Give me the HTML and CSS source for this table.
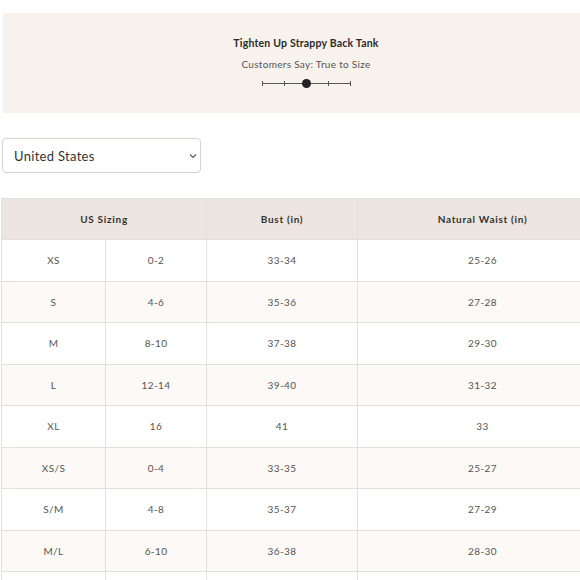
FILE: index.html
```html
<!DOCTYPE html>
<html>
<head>
<meta charset="utf-8">
<link rel="stylesheet" href="styles.css">
</head>
<body>
<div class="page">
<section class="banner">
  <div class="title">Tighten Up Strappy Back Tank</div>
  <div class="subtitle">Customers Say: True to Size</div>
  <div class="scale">
    <span class="tick t0"></span>
    <span class="tick t1"></span>
    <span class="tick t3"></span>
    <span class="tick t4"></span>
    <span class="dot"></span>
  </div>
</section>
<div class="select">
  <span class="select-text">United States</span>
  <svg class="chev" width="8" height="6" viewBox="0 0 8 6"><path d="M1 1.5 L4 4.5 L7 1.5" fill="none" stroke="#555" stroke-width="1.1"/></svg>
</div>
<table class="sizes">
  <colgroup><col class="c1"><col class="c2"><col class="c3"><col class="c4"></colgroup>
  <thead>
    <tr><th colspan="2">US Sizing</th><th>Bust (in)</th><th>Natural Waist (in)</th></tr>
  </thead>
  <tbody>
    <tr><td>XS</td><td>0-2</td><td>33-34</td><td>25-26</td></tr>
    <tr class="alt"><td>S</td><td>4-6</td><td>35-36</td><td>27-28</td></tr>
    <tr><td>M</td><td>8-10</td><td>37-38</td><td>29-30</td></tr>
    <tr class="alt"><td>L</td><td>12-14</td><td>39-40</td><td>31-32</td></tr>
    <tr><td>XL</td><td>16</td><td>41</td><td>33</td></tr>
    <tr class="alt"><td>XS/S</td><td>0-4</td><td>33-35</td><td>25-27</td></tr>
    <tr><td>S/M</td><td>4-8</td><td>35-37</td><td>27-29</td></tr>
    <tr class="alt"><td>M/L</td><td>6-10</td><td>36-38</td><td>28-30</td></tr>
    <tr><td>L/XL</td><td>10-14</td><td>38-40</td><td>30-32</td></tr>
  </tbody>
</table>
</div>
</body>
</html>
```
FILE: styles.css
```css
html, body {
  margin: 0;
  padding: 0;
  background: #fff;
  overflow: hidden;
  font-family: "Lato", "Open Sans", sans-serif;
}
.page {
  width: 612px;
  height: 580px;
  overflow: hidden;
}
.banner {
  margin: 13px 0 0 3px;
  width: 606px;
  height: 100px;
  background: #f8f2ed;
  display: flex;
  flex-direction: column;
  align-items: center;
  box-sizing: border-box;
  padding-top: 23px;
}
.title {
  font-size: 10.5px;
  font-weight: 700;
  color: #2b2b2b;
  letter-spacing: 0.2px;
  line-height: 14px;
}
.subtitle {
  margin-top: 7px;
  font-size: 10px;
  color: #555;
  letter-spacing: 0.3px;
  line-height: 14px;
}
.scale {
  position: relative;
  margin-top: 8px;
  width: 89px;
  height: 9px;
}
.scale::before {
  content: "";
  position: absolute;
  left: 0;
  right: 0;
  top: 4px;
  height: 1px;
  background: #555;
}
.tick {
  position: absolute;
  top: 2px;
  width: 1px;
  height: 5px;
  background: #555;
}
.t0 { left: 0; }
.t1 { left: 22px; }
.t3 { left: 66px; }
.t4 { left: 88px; }
.dot {
  position: absolute;
  left: 40px;
  top: 0;
  width: 9px;
  height: 9px;
  border-radius: 50%;
  background: #222;
}
.select {
  margin: 25px 0 0 2px;
  width: 199px;
  height: 35px;
  box-sizing: border-box;
  border: 1px solid #d6d2cf;
  border-radius: 4px;
  display: flex;
  align-items: center;
  justify-content: space-between;
  padding: 0 3px 0 11px;
  background: #fff;
}
.select-text {
  font-size: 13px;
  color: #333;
  letter-spacing: 0.3px;
}
.sizes {
  margin: 25px 0 0 1px;
  border-collapse: collapse;
  width: 606px;
  table-layout: fixed;
}
.c1 { width: 104px; }
.c2 { width: 101px; }
.c3 { width: 151px; }
.c4 { width: 250px; }
.sizes th, .sizes td {
  border: 1px solid #e3dfdc;
  text-align: center;
  padding: 0;
}
.sizes th {
  background: #ede5df;
  height: 40px;
  font-size: 10px;
  font-weight: 700;
  color: #333;
  letter-spacing: 0.7px;
}
.sizes td {
  height: 40.5px;
  font-size: 10px;
  color: #555;
  letter-spacing: 0.4px;
}
.sizes tr.alt td { background: #fdf9f7; }
```
